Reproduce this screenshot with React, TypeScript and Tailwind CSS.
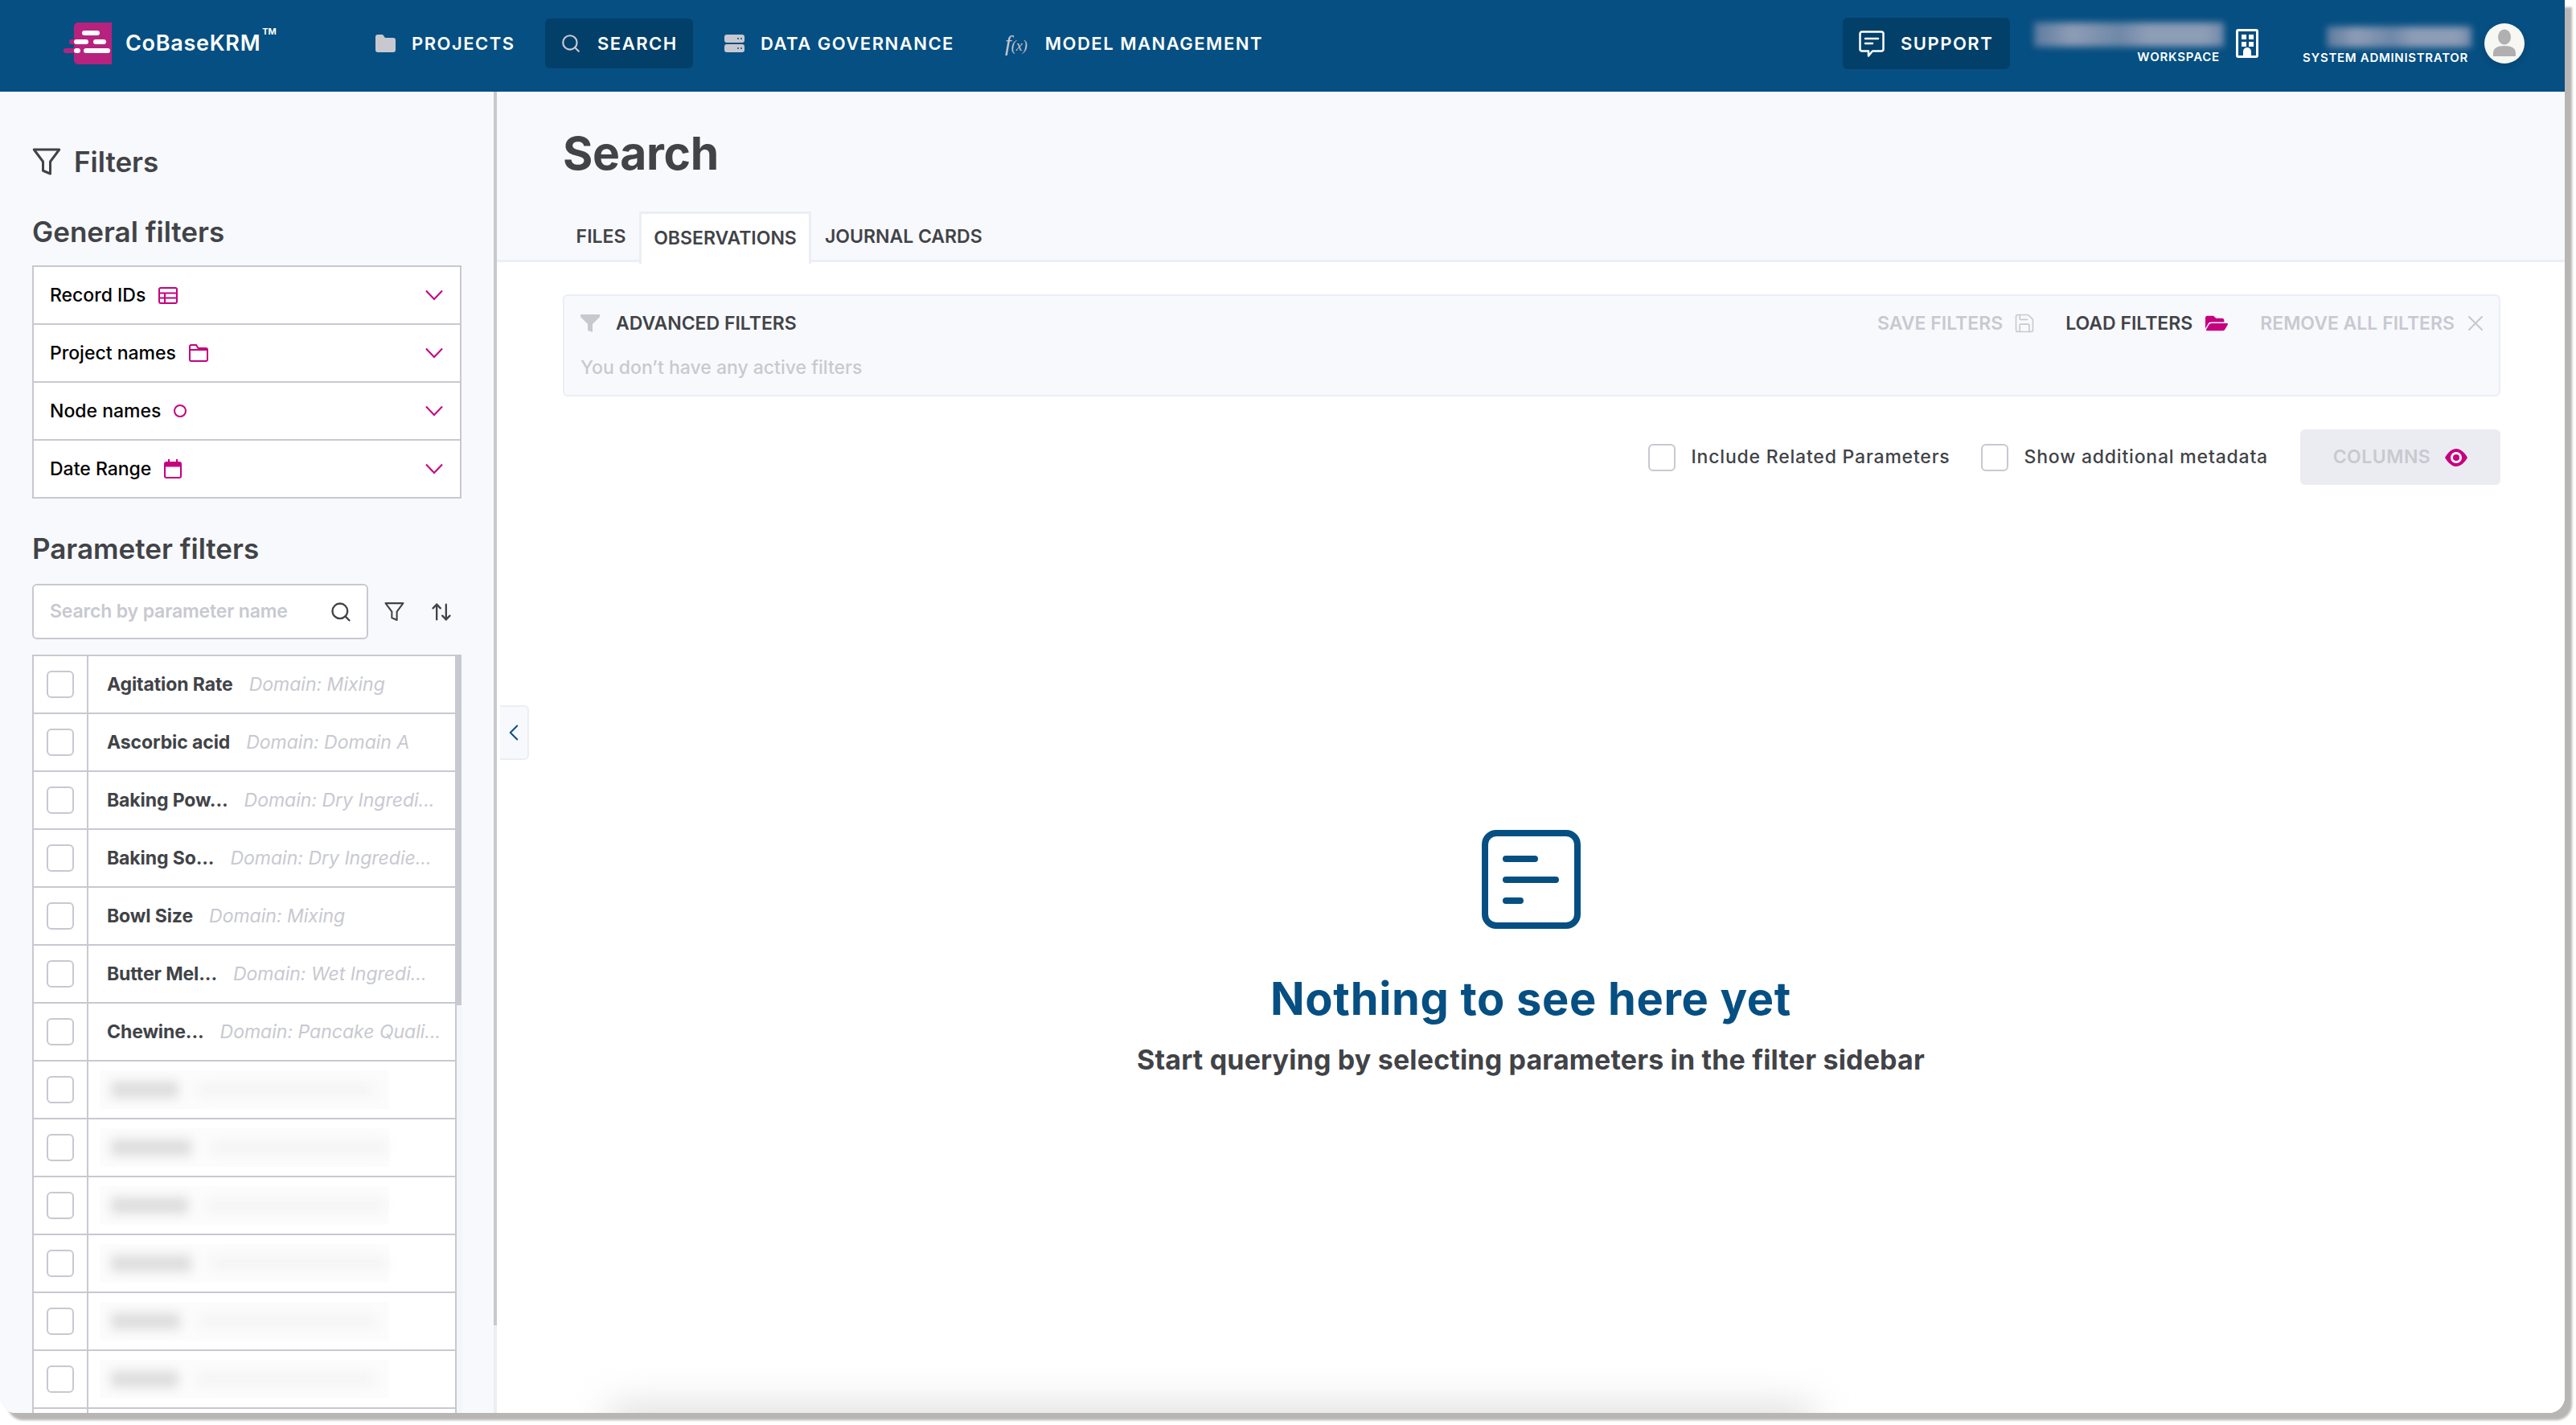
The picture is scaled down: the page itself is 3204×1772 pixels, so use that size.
import { ArrowUpDown, ChevronLeft, Save, Search, X } from "lucide-react";
import { FaFolderOpen } from "react-icons/fa";

const generalFilters = [
  { label: "Record IDs", icon: <TableIcon /> },
  { label: "Project names", icon: <FolderOutline /> },
  { label: "Node names", icon: <span className="block w-[16px] h-[16px] rounded-full border-2 border-[#c6007e]" /> },
  { label: "Date Range", icon: <CalendarIcon /> },
];

const parameters = [
  { name: "Agitation Rate", domain: "Domain: Mixing" },
  { name: "Ascorbic acid", domain: "Domain: Domain A" },
  { name: "Baking Pow...", domain: "Domain: Dry Ingredi..." },
  { name: "Baking So...", domain: "Domain: Dry Ingredie..." },
  { name: "Bowl Size", domain: "Domain: Mixing" },
  { name: "Butter Mel...", domain: "Domain: Wet Ingredi..." },
  { name: "Chewine...", domain: "Domain: Pancake Quali..." },
];

const blurredRows = [84, 100, 96, 100, 86, 84, 92];

function TableIcon() {
  return (
    <svg width="24" height="21" viewBox="0 0 24 21" fill="none" stroke="#c6007e" strokeWidth="2">
      <rect x="1" y="1" width="22" height="19" rx="2" />
      <path d="M1 7.500h22M1 13.500h22M8 7.500V20" />
    </svg>
  );
}

function FolderOutline() {
  return (
    <svg width="24" height="22" viewBox="0 0 24 22" fill="none" stroke="#c6007e" strokeWidth="2">
      <path d="M1 3a2 2 0 0 1 2-2h6l2.500 4H21a2 2 0 0 1 2 2v12a2 2 0 0 1-2 2H3a2 2 0 0 1-2-2z" />
      <path d="M1 7h22" />
    </svg>
  );
}

function CalendarIcon() {
  return (
    <svg width="22" height="24" viewBox="0 0 22 24" fill="none" stroke="#c6007e" strokeWidth="2">
      <rect x="1" y="4" width="20" height="19" rx="2" />
      <path d="M1 7h20" strokeWidth="5" />
      <path d="M6 0v4M16 0v4" />
    </svg>
  );
}

function Chevron() {
  return (
    <svg width="22" height="14" viewBox="0 0 22 14" fill="none" stroke="#c6007e" strokeWidth="2" className="ml-auto">
      <path d="M1 1.500 11 12 21 1.500" />
    </svg>
  );
}

function Funnel({ size, stroke = 2 }: { size: number; stroke?: number }) {
  return (
    <svg width={size} height={size} viewBox="0 0 24 24" fill="none" stroke="#414347" strokeWidth={stroke} strokeLinejoin="round">
      <path d="M1.500 2h21L15 12v10l-6-2.500V12z" />
    </svg>
  );
}

function Logo() {
  return (
    <svg width="60" height="54" viewBox="0 0 60 54" className="shrink-0">
      <rect x="13" y="1" width="51" height="52" rx="5" fill="#b7227f" />
      <rect x="23" y="11" width="22" height="6" rx="3" fill="#fff" />
      <rect x="7" y="22" width="24" height="6" rx="3" fill="#b7227f" />
      <rect x="13" y="22" width="18" height="6" rx="3" fill="#fff" />
      <rect x="37" y="22" width="16" height="6" rx="3" fill="#fff" />
      <rect x="0" y="33" width="21" height="6" rx="3" fill="#b7227f" />
      <rect x="13" y="33" width="8" height="6" rx="3" fill="#fff" />
      <rect x="25" y="33" width="33" height="6" rx="3" fill="#fff" />
    </svg>
  );
}

function FolderSolid() {
  return (
    <svg width="25" height="22" viewBox="0 0 25 22" fill="#c8c9d0">
      <path d="M0 3a3 3 0 0 1 3-3h6l3 4h10a3 3 0 0 1 3 3v12a3 3 0 0 1-3 3H3a3 3 0 0 1-3-3z" />
    </svg>
  );
}

function ServerIcon() {
  return (
    <svg width="25" height="22" viewBox="0 0 25 22">
      <rect x="0" y="0" width="25" height="10" rx="3" fill="#c8c9d0" />
      <rect x="0" y="12" width="25" height="10" rx="3" fill="#c8c9d0" />
      <path d="M16 5h2M20 5h2M16 17h2M20 17h2" stroke="#064f82" strokeWidth="1.500" />
    </svg>
  );
}

function SupportIcon() {
  return (
    <svg width="32" height="33" viewBox="0 0 32 33" fill="none" stroke="#fff" strokeWidth="2.500" strokeLinejoin="round" strokeLinecap="round">
      <path d="M4 1.500h24A2.500 2.500 0 0 1 30.500 4v19a2.500 2.500 0 0 1-2.500 2.500H17l-5 6v-6H4A2.500 2.500 0 0 1 1.500 23V4A2.500 2.500 0 0 1 4 1.500z" />
      <path d="M8 10h16M8 16h9" />
    </svg>
  );
}

function BuildingIcon() {
  return (
    <svg width="28" height="36" viewBox="0 0 28 36" fill="#fff">
      <path fillRule="evenodd" d="M3 0h22a3 3 0 0 1 3 3v30a3 3 0 0 1-3 3H3a3 3 0 0 1-3-3V3a3 3 0 0 1 3-3zM3 3v30h6v-5a5 5 0 0 1 10 0v5h6V3zM7 7h6v6H7zM16 7h6v6h-6zM7 16h6v6H7zM16 16h6v6h-6z" />
    </svg>
  );
}

function Avatar() {
  return (
    <span className="flex w-[50px] h-[50px] rounded-full bg-[#f7f7f3] items-center justify-center overflow-hidden shadow-[0_4px_10px_rgba(0,0,0,0.12)]">
      <svg width="50" height="50" viewBox="0 0 50 50" fill="#b0b0b0">
        <ellipse cx="25" cy="17" rx="8" ry="9.500" />
        <path d="M11 41v-4c0-6 5-9 14-9s14 3 14 9v4z" />
      </svg>
    </span>
  );
}

function EmptyIcon() {
  return (
    <svg width="123" height="123" viewBox="0 0 123 123" fill="none" stroke="#064f82" strokeWidth="8" strokeLinecap="round">
      <rect x="4" y="4" width="115" height="115" rx="14" />
      <path d="M30 36h36M30 62h62M30 88h18" />
    </svg>
  );
}

function Checkbox() {
  return <span className="block shrink-0 w-[34px] h-[34px] rounded-[6px] border-2 border-[#c8c9d0] bg-white" />;
}

function NavItem({ icon, label, active, width, gap = "gap-[20px]" }: { icon: React.ReactNode; label: string; active?: boolean; width: string; gap?: string }) {
  return (
    <div className={`flex items-center ${gap} h-[62px] rounded-[6px] pl-[19px] text-[22px] font-semibold tracking-[1.500px] text-white ${width} ${active ? "bg-[#034069]" : ""}`}>
      {icon}
      <span>{label}</span>
    </div>
  );
}

export default function App() {
  return (
    <div className="w-[3204px] h-[1772px] bg-white overflow-hidden" style={{ fontFamily: "Inter, 'Noto Sans', sans-serif" }}>
      <div className="w-[3190px] h-[1757px] flex flex-col bg-white rounded-b-[20px] shadow-[9px_9px_3px_#b8b6b4]">
        {/* top bar */}
        <header className="h-[114px] shrink-0 bg-[#064f82] flex items-center pl-[79px] pr-[50px] pb-[6px]">
          <div className="flex items-center w-[369px]">
            <Logo />
            <span className="ml-[17px] text-[27px] font-semibold text-white tracking-[0.7px]">CoBaseKRM</span>
            <span className="self-start mt-[4px] ml-[2px] text-[11px] font-bold text-white">TM</span>
          </div>
          <NavItem width="w-[230px]" icon={<FolderSolid />} label="PROJECTS" />
          <NavItem width="w-[184px]" active icon={<Search size={26} color="#c8c9d0" strokeWidth={2} />} label="SEARCH" />
          <div className="w-[20px]" />
          <NavItem width="w-[349px]" icon={<ServerIcon />} label="DATA GOVERNANCE" />
          <NavItem
            width="w-[360px]"
            gap="gap-[22px]"
            icon={
              <span className="text-[#c8c9d0] font-normal tracking-[0px] italic" style={{ fontFamily: "'Liberation Serif', serif" }}>
                <span className="text-[28px]">f</span>
                <span className="text-[18px]">(x)</span>
              </span>
            }
            label="MODEL MANAGEMENT"
          />
          <div className="flex-1" />
          <div className="flex items-center gap-[20px] w-[208px] h-[64px] rounded-[6px] pl-[20px] bg-[#034069] text-[22px] font-semibold tracking-[1.500px] text-white">
            <SupportIcon />
            <span>SUPPORT</span>
          </div>
          <div className="ml-[30px] w-[236px] flex flex-col items-end">
            <div className="w-[236px] h-[30px] blur-[4px] bg-[linear-gradient(90deg,#5d7b9f,#8e9db6_20%,#6f88a8_45%,#8e9db6_60%,#8e9db6_90%,#7089aa)]" />
            <span className="mt-[4px] mr-[5px] text-[15px] leading-[18px] font-semibold tracking-[0.8px] text-white">WORKSPACE</span>
          </div>
          <div className="ml-[15px] mr-[56px]">
            <BuildingIcon />
          </div>
          <div className="flex flex-col items-end w-[205px] pt-[6px]">
            <div className="w-[180px] h-[26px] -mr-[4px] blur-[4px] bg-[linear-gradient(90deg,#5d7b9f,#8e9db6_20%,#6f88a8_45%,#8e9db6_60%,#8e9db6_90%,#7089aa)]" />
            <span className="mt-[4px] text-[15px] leading-[18px] font-semibold tracking-[0.7px] text-white whitespace-nowrap">SYSTEM ADMINISTRATOR</span>
          </div>
          <div className="ml-[20px]">
            <Avatar />
          </div>
        </header>

        <div className="flex flex-1 min-h-0 rounded-b-[20px] overflow-hidden">
          {/* sidebar */}
          <aside className="w-[618px] shrink-0 flex bg-[#f8f9fd]">
            <div className="w-[614px] pl-[40px] overflow-hidden">
              <div className="mt-[67px] h-[40px] flex items-center gap-[16px]">
                <Funnel size={36} stroke={2} />
                <span className="text-[35px] font-semibold text-[#414347]">Filters</span>
              </div>
              <h2 className="mt-[47px] h-[40px] leading-[40px] text-[35px] font-semibold text-[#414347]">General filters</h2>
              <div className="mt-[22px] w-[534px] border-2 border-[#c8c9d0] bg-white">
                {generalFilters.map((f, i) => (
                  <div key={f.label} className={`flex items-center pl-[20px] pr-[21px] ${i < 3 ? "h-[72px] border-b-2 border-[#c8c9d0]" : "h-[70px]"}`}>
                    <span className="text-[23px] font-medium text-black">{f.label}</span>
                    <span className="ml-[16px] flex items-center">{f.icon}</span>
                    <Chevron />
                  </div>
                ))}
              </div>
              <h2 className="mt-[42px] h-[40px] leading-[40px] text-[35px] font-semibold text-[#414347]">Parameter filters</h2>
              <div className="mt-[24px] flex items-center">
                <div className="w-[418px] h-[69px] rounded-[6px] border-2 border-[#c8c9d0] bg-white flex items-center pl-[20px] pr-[18px]">
                  <span className="text-[23px] font-semibold tracking-[-0.15px] text-[#c8c9d0]">Search by parameter name</span>
                  <Search size={28} color="#414347" strokeWidth={2} className="ml-auto" />
                </div>
                <span className="ml-[20px]">
                  <Funnel size={25} />
                </span>
                <ArrowUpDown size={28} color="#414347" strokeWidth={2} className="ml-[32px]" />
              </div>
              <div className="mt-[19px] w-[534px] flex border-t-2 border-[#c8c9d0]">
                <div className="w-[528px] bg-white border-x-2 border-[#c8c9d0]">
                  {parameters.map((p) => (
                    <div key={p.domain + p.name} className="h-[72px] flex border-b-2 border-[#c8c9d0]">
                      <div className="w-[68px] shrink-0 flex items-center pl-[16px] border-r-2 border-[#c8c9d0]">
                        <Checkbox />
                      </div>
                      <div className="flex items-center pl-[23px] gap-[20px] text-[23px] whitespace-nowrap">
                        <span className="font-bold tracking-[-0.1px] text-[#414347]">{p.name}</span>
                        <span className="italic text-[#c8c9d0]">{p.domain}</span>
                      </div>
                    </div>
                  ))}
                  {blurredRows.map((w, i) => (
                    <div key={i} className="h-[72px] flex border-b-2 border-[#c8c9d0]">
                      <div className="w-[68px] shrink-0 flex items-center pl-[16px] border-r-2 border-[#c8c9d0]">
                        <Checkbox />
                      </div>
                      <div className="ml-[14px] my-auto h-[48px] w-[360px] bg-[#fcfcfc] flex items-center pl-[14px] gap-[24px]">
                        <div className="h-[20px] bg-[#dcdcdc] blur-[7px]" style={{ width: w }} />
                        <div className="h-[16px] w-[220px] bg-[#f4f4f4] blur-[7px]" />
                      </div>
                    </div>
                  ))}
                </div>
                <div className="w-[6px] bg-[#f4f5fb]">
                  <div className="h-[434px] bg-[#c8c9d0]" />
                </div>
              </div>
            </div>
            <div className="w-[4px] bg-[#eceef5]">
              <div className="h-[1534px] bg-[#c8c9d0]" />
            </div>
          </aside>

          {/* main */}
          <main className="relative flex-1 min-w-0 bg-white">
            <button className="absolute left-[4px] top-[763px] w-[36px] h-[68px] flex items-center justify-center bg-[#f8f9fd] border-2 border-l-0 border-[#eceef5] rounded-r-[6px]">
              <ChevronLeft size={38} color="#064f82" strokeWidth={1.400} />
            </button>
            <div className="absolute left-[140px] right-[935px] -bottom-[40px] h-[50px] bg-[#dedede] blur-[24px]" />
            <div className="h-[212px] bg-[#f8f9fd] border-b-[3px] border-[#eceef5] pl-[82px] flex flex-col">
              <h1 className="mt-[37px] h-[80px] leading-[80px] text-[57px] font-bold tracking-[-0.3px] text-[#414347]">Search</h1>
              <div className="mt-[32px] flex h-[62px] text-[23px] font-semibold text-[#414347]">
                <div className="w-[95px] flex items-center justify-center">FILES</div>
                <div className="w-[214px] h-[65px] pb-[2px] flex items-center justify-center bg-white border-x-[3px] border-t-[3px] border-[#eceef5]">OBSERVATIONS</div>
                <div className="pl-[17px] flex items-center">JOURNAL CARDS</div>
              </div>
            </div>
            <div className="relative ml-[82px] mr-[80px] mt-[40px] h-[127px] rounded-[6px] bg-[#f8f9fd] border-2 border-[#eceef5] px-[20px] pt-[14px]">
              <div className="h-[40px] flex items-center text-[23px] font-semibold">
                <svg width="24" height="22" viewBox="0 0 24 22" fill="#c8c9d0">
                  <path d="M0 0h24v3L15 12v10l-6-2v-8L0 3z" />
                </svg>
                <span className="ml-[20px] text-[#414347]">ADVANCED FILTERS</span>
                <span className="ml-auto text-[#c8c9d0]">SAVE FILTERS</span>
                <Save size={28} color="#c8c9d0" strokeWidth={1.400} className="ml-[13px]" />
                <span className="ml-[37px] text-[#414347]">LOAD FILTERS</span>
                <FaFolderOpen size={28} color="#c6007e" className="ml-[16px]" />
                <span className="ml-[40px] text-[#c8c9d0]">REMOVE ALL FILTERS</span>
                <X size={32} color="#c8c9d0" strokeWidth={1.600} className="ml-[10px] -mr-[7px]" />
              </div>
              <p className="mt-[18px] text-[23px] font-medium text-[#c8c9d0]">You don’t have any active filters</p>
            </div>
            <div className="relative mt-[41px] mr-[80px] flex items-center justify-end text-[23px] font-medium tracking-[0.8px] text-[#414347]">
              <Checkbox />
              <span className="ml-[20px]">Include Related Parameters</span>
              <span className="ml-[38px]">
                <Checkbox />
              </span>
              <span className="ml-[20px]">Show additional metadata</span>
              <div className="ml-[40px] w-[249px] h-[69px] rounded-[6px] bg-[#ebecf1] flex items-center justify-center gap-[18px] text-[#c8c9d0] font-semibold tracking-[0.5px]">
                <span>COLUMNS</span>
                <svg width="28" height="22" viewBox="0 0 28 22">
                  <path d="M0 11C4 4 9 0 14 0s10 4 14 11c-4 7-9 11-14 11S4 18 0 11z" fill="#c6007e" />
                  <circle cx="14" cy="11" r="7" fill="#fff" />
                  <circle cx="14" cy="11" r="4" fill="#c6007e" />
                </svg>
              </div>
            </div>
            <div className="relative mt-[429px] flex flex-col items-center">
              <EmptyIcon />
              <h2 className="mt-[47px] h-[80px] leading-[80px] text-[56px] font-bold tracking-[0.65px] text-[#064f82]">Nothing to see here yet</h2>
              <p className="mt-[16px] h-[40px] leading-[40px] text-[34px] font-bold tracking-[0.17px] text-[#414347]">Start querying by selecting parameters in the filter sidebar</p>
            </div>
          </main>
        </div>
      </div>
    </div>
  );
}
